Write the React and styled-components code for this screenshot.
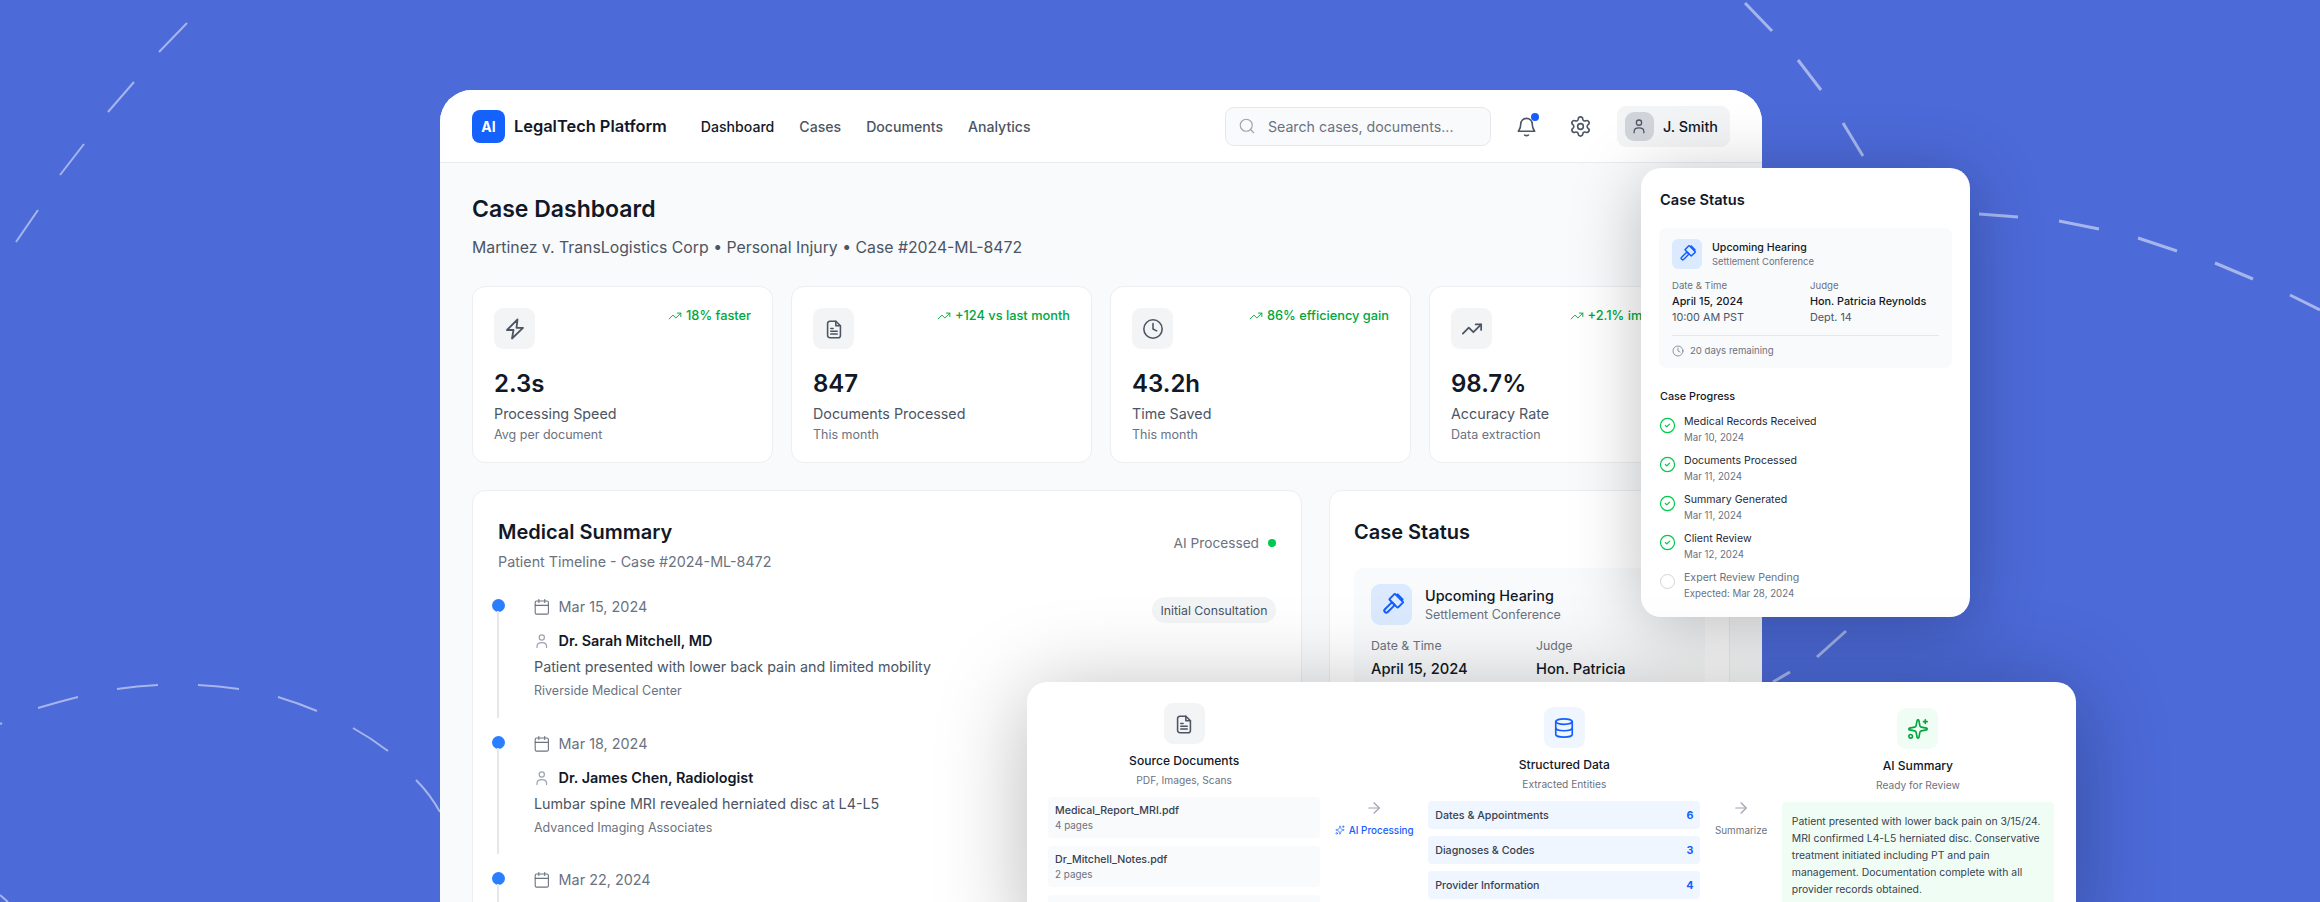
import React from 'react';
import styled, { createGlobalStyle } from 'styled-components';
import { ArrowRight, CircleCheck, Calendar, Clock, Database, Search, Settings, Sparkles, TrendingUp } from 'lucide-react';

const GlobalStyle = createGlobalStyle`
  html, body {
    margin: 0;
    height: 902px;
    overflow: hidden;
    background: #4c6ad8;
    font-family: Inter, "Liberation Sans", sans-serif;
    color: #111827;
  }
  * { box-sizing: border-box; }
`;

const Page = styled.div`
  position: relative;
  width: 2320px;
  height: 902px;
  padding: 90px 0 0 440px;
  overflow: hidden;
  background: #4c6ad8;
`;

const Dashes = styled.svg`
  position: absolute;
  inset: 0;
  width: 2320px;
  height: 902px;
  fill: none;
  stroke: rgba(255, 255, 255, 0.5);
`;

const Window = styled.div`
  position: relative;
  width: 1322px;
  height: 900px;
  border-radius: 32px 32px 0 0;
  background: #f9fafb;
  overflow: hidden;
`;

const Header = styled.header`
  display: flex;
  align-items: center;
  justify-content: space-between;
  height: 73px;
  padding: 0 32px;
  background: #fff;
  border-bottom: 1px solid #e9ebef;
`;

const HeaderGroup = styled.div`
  display: flex;
  align-items: center;
`;

const Logo = styled.div`
  display: flex;
  align-items: center;
  justify-content: center;
  width: 33px;
  height: 33px;
  border-radius: 8px;
  background: #1461fb;
  color: #fff;
  font-size: 14px;
  font-weight: 700;
`;

const Brand = styled.div`
  margin: 0 34px 0 9px;
  font-size: 16.4px;
  font-weight: 600;
  white-space: nowrap;
`;

const Nav = styled.nav`
  display: flex;
  gap: 25px;
`;

const NavLink = styled.a`
  font-size: 14.1px;
  font-weight: 500;
  color: ${(p) => (p.$active ? '#111827' : '#4b5563')};
`;

const SearchBox = styled.div`
  display: flex;
  align-items: center;
  gap: 12px;
  width: 266px;
  height: 39px;
  padding: 0 12px;
  border: 1px solid #e5e7eb;
  border-radius: 9px;
  background: #f9fafb;
  color: #6b7280;
  font-size: 14.2px;
  white-space: nowrap;
`;

const IconButton = styled.div`
  position: relative;
  display: flex;
  align-items: center;
  justify-content: center;
  width: 36px;
  height: 36px;
  margin-left: 18px;
  color: #4b5563;
`;

const BellDot = styled.span`
  position: absolute;
  top: 5px;
  right: 6px;
  width: 8px;
  height: 8px;
  border-radius: 50%;
  background: #155dfc;
`;

const UserPill = styled.div`
  display: flex;
  align-items: center;
  gap: 9px;
  height: 41px;
  margin-left: 18px;
  padding: 0 12px 0 8px;
  border-radius: 9px;
  background: #f3f4f6;
  font-size: 14.4px;
  font-weight: 500;
  white-space: nowrap;
`;

const Avatar = styled.div`
  display: flex;
  align-items: center;
  justify-content: center;
  width: 29px;
  height: 29px;
  border-radius: 9px;
  background: #d1d5db;
  color: #4b5563;
`;

const Content = styled.main`
  padding: 30px 32px 0;
`;

const Title = styled.h1`
  margin: 0;
  font-size: 23px;
  font-weight: 600;
  line-height: 32px;
`;

const Subtitle = styled.p`
  margin: 11px 0 26px;
  font-size: 15.8px;
  line-height: 24px;
  color: #4b5563;
`;

const StatGrid = styled.div`
  display: grid;
  grid-template-columns: repeat(4, 1fr);
  gap: 18px;
`;

const Card = styled.section`
  border: 1px solid #eceef1;
  border-radius: 13px;
  background: #fff;
`;

const StatCard = styled(Card)`
  height: 177px;
  padding: 21px;
`;

const StatTop = styled.div`
  display: flex;
  align-items: flex-start;
  justify-content: space-between;
`;

const IconTile = styled.div`
  display: flex;
  align-items: center;
  justify-content: center;
  flex: none;
  width: ${(p) => p.$size || 41}px;
  height: ${(p) => p.$size || 41}px;
  border-radius: ${(p) => p.$radius || 9}px;
  background: ${(p) => p.$bg || '#f3f4f6'};
  color: ${(p) => p.$color || '#4b5563'};
`;

const Trend = styled.div`
  display: flex;
  align-items: center;
  gap: 4px;
  font-size: 12.8px;
  font-weight: 500;
  line-height: 16px;
  color: #00a63e;
  white-space: nowrap;
`;

const StatValue = styled.div`
  margin-top: 22px;
  font-size: 24px;
  font-weight: 600;
  line-height: 26px;
`;

const StatLabel = styled.div`
  margin-top: 7px;
  font-size: 14.3px;
  line-height: 20px;
  color: #4b5563;
`;

const StatNote = styled.div`
  margin-top: 3px;
  font-size: 12.5px;
  line-height: 16px;
  color: #6b7280;
`;

const Columns = styled.div`
  display: grid;
  grid-template-columns: 830px 1fr;
  gap: 27px;
  margin-top: 27px;
`;

const SummaryCard = styled(Card)`
  height: 600px;
  padding: 27px 25px;
`;

const CardHead = styled.div`
  display: flex;
  align-items: flex-start;
  justify-content: space-between;
  margin-bottom: 25px;
`;

const CardTitle = styled.h2`
  margin: 0;
  font-size: 20px;
  font-weight: 600;
  line-height: 28px;
`;

const CardSub = styled.p`
  margin: 6px 0 0;
  font-size: 14.3px;
  line-height: 20px;
  color: #6b7280;
`;

const Processed = styled.div`
  display: flex;
  align-items: center;
  gap: 9px;
  margin-top: 16px;
  font-size: 13.7px;
  line-height: 18px;
  color: #6b7280;
`;

const GreenDot = styled.span`
  width: 8px;
  height: 8px;
  border-radius: 50%;
  background: #00c950;
`;

const TimelineItem = styled.article`
  position: relative;
  height: 136.5px;
  padding-left: 35px;
`;

const TimelineDot = styled.span`
  position: absolute;
  top: 2px;
  left: -6px;
  width: 13px;
  height: 13px;
  border-radius: 50%;
  background: #2b7fff;
`;

const TimelineLine = styled.span`
  position: absolute;
  top: 14px;
  bottom: 16px;
  left: -1px;
  width: 2px;
  background: #e5e7eb;
`;

const MetaRow = styled.div`
  display: flex;
  align-items: center;
  gap: 8px;
  margin-top: ${(p) => p.$top || 0}px;
  font-size: 14.4px;
  line-height: 20px;
  color: ${(p) => (p.$strong ? '#111827' : '#6b7280')};
  font-weight: ${(p) => (p.$strong ? 600 : 400)};

  svg {
    color: ${(p) => (p.$strong ? '#9ca3af' : '#6b7280')};
  }
`;

const EventText = styled.p`
  margin: 6px 0;
  padding-left: 1px;
  font-size: 14.3px;
  line-height: 20px;
  color: #4b5563;
`;

const Facility = styled.div`
  margin-top: -1px;
  padding-left: 1px;
  font-size: 12.5px;
  line-height: 18px;
  color: #6b7280;
`;

const Tag = styled.span`
  position: absolute;
  top: 0;
  right: 0;
  display: flex;
  align-items: center;
  height: 26px;
  padding: 0 8.5px;
  border-radius: 13px;
  background: #f3f4f6;
  font-size: 12.3px;
  color: #4b5563;
`;

const StatusCard = styled(Card)`
  height: 600px;
  padding: 27px 24px;
`;

const HearingBox = styled.div`
  margin-top: 22px;
  padding: 16px 17px;
  border-radius: 9px;
  background: #f9fafb;
`;

const HearingHead = styled.div`
  display: flex;
  align-items: center;
  gap: ${(p) => p.$gap || 13}px;
`;

const HearingName = styled.div`
  font-size: ${(p) => p.$size || 14.4}px;
  font-weight: 500;
  line-height: ${(p) => p.$line || 20}px;
`;

const HearingType = styled.div`
  font-size: ${(p) => p.$size || 12.5}px;
  line-height: ${(p) => p.$line || 18}px;
  color: #6b7280;
`;

const HearingGrid = styled.div`
  display: grid;
  grid-template-columns: ${(p) => p.$cols || '165px 1fr'};
  margin-top: ${(p) => p.$top || 12}px;
`;

const HearingLabel = styled.div`
  font-size: ${(p) => p.$size || 12.3}px;
  line-height: ${(p) => p.$line || 18}px;
  color: #6b7280;
`;

const HearingValue = styled.div`
  margin-top: ${(p) => p.$top ?? 3}px;
  font-size: ${(p) => p.$size || 14.7}px;
  font-weight: 500;
  line-height: ${(p) => p.$line || 22}px;
`;

const HearingDetail = styled.div`
  font-size: ${(p) => p.$size || 14.7}px;
  line-height: ${(p) => p.$line || 22}px;
  color: #4b5563;
`;

const StatusPopup = styled.aside`
  position: absolute;
  top: 168px;
  left: 1641px;
  width: 329px;
  height: 449px;
  padding: 22px 18px;
  border-radius: 20px;
  background: #fff;
  box-shadow: 0 10px 70px rgba(0, 0, 0, 0.25);
`;

const PopupTitle = styled.h3`
  margin: 0 0 0 1px;
  font-size: 14.6px;
  font-weight: 600;
  line-height: 20px;
`;

const PopupBox = styled.div`
  height: 140px;
  margin-top: 18px;
  padding: 11px 13px;
  border-radius: 7px;
  background: #f9fafb;
`;

const Remaining = styled.div`
  display: flex;
  align-items: center;
  gap: 6px;
  margin-top: 9px;
  padding-top: 7px;
  border-top: 1px solid #e5e7eb;
  font-size: 9.6px;
  line-height: 16px;
  color: #6b7280;
`;

const ProgressTitle = styled.h4`
  margin: 21px 0 9px 1px;
  font-size: 10.8px;
  font-weight: 500;
  line-height: 16px;
`;

const ProgressItem = styled.div`
  display: flex;
  gap: 8px;
  height: 39px;
`;

const PendingMark = styled.span`
  flex: none;
  width: 15px;
  height: 15px;
  margin: 4px 1px 0 1px;
  border: 1px solid #d1d5db;
  border-radius: 50%;
`;

const CheckMark = styled(CircleCheck)`
  flex: none;
  margin-top: 3px;
  color: #00c950;
`;

const ProgressName = styled.div`
  font-size: 10.6px;
  line-height: 16px;
  color: ${(p) => (p.$pending ? '#6b7280' : '#1f2937')};
`;

const ProgressDate = styled.div`
  font-size: 9.7px;
  line-height: 16px;
  color: #6b7280;
`;

const FlowPopup = styled.aside`
  position: absolute;
  top: 682px;
  left: 1027px;
  display: flex;
  gap: 14.5px;
  width: 1049px;
  height: 260px;
  padding: 0 22px 0 21px;
  border-radius: 20px;
  background: #fff;
  box-shadow: 0 10px 90px rgba(0, 0, 0, 0.28);
`;

const FlowColumn = styled.div`
  display: flex;
  flex: 1 1 0;
  flex-direction: column;
  align-items: center;
  padding-top: ${(p) => p.$top}px;
`;

const FlowTitle = styled.div`
  margin-top: 8px;
  font-size: 12.1px;
  font-weight: 500;
  line-height: 18px;
`;

const FlowSub = styled.div`
  margin: 2px 0 9px;
  font-size: 10.2px;
  line-height: 16px;
  color: #6b7280;
`;

const RowList = styled.div`
  display: flex;
  flex-direction: column;
  gap: ${(p) => p.$gap}px;
  align-self: stretch;
`;

const FileItem = styled.div`
  height: 41px;
  padding: 7px;
  border-radius: 4px;
  background: #f9fafb;
`;

const FileName = styled.div`
  font-size: 10.6px;
  font-weight: 500;
  line-height: 14px;
  color: #374151;
`;

const FilePages = styled.div`
  font-size: 9.9px;
  line-height: 14px;
  color: #6b7280;
`;

const EntityRow = styled.div`
  display: flex;
  align-items: center;
  justify-content: space-between;
  height: 28px;
  padding: 0 7px;
  border-radius: 4px;
  background: #eff6ff;
  font-size: 10.7px;
  font-weight: 500;
  color: #374151;
`;

const EntityCount = styled.span`
  font-weight: 700;
  color: #155dfc;
`;

const Connector = styled.div`
  display: flex;
  flex: none;
  flex-direction: column;
  align-items: center;
  gap: 5px;
  padding-top: 117px;
  color: #9ca3af;
`;

const ConnectorLabel = styled.div`
  display: flex;
  align-items: center;
  gap: 4px;
  font-size: 9.9px;
  font-weight: ${(p) => (p.$active ? 500 : 400)};
  line-height: 16px;
  color: ${(p) => (p.$active ? '#155dfc' : '#6b7280')};
  white-space: nowrap;
`;

const SummaryBox = styled.div`
  align-self: stretch;
  height: 120px;
  padding: 11px 9px 0 10px;
  border-radius: 4px;
  background: #f0fdf4;
  font-size: 10.4px;
  line-height: 17px;
  color: #374151;
`;

function ZapIcon({ size = 24 }) {
  return (
    <svg width={size} height={size} viewBox="0 0 24 24" fill="none" stroke="currentColor" strokeWidth="1.8" strokeLinejoin="round">
      <path d="M14.5 2.500L4 13h6.500L9 21.500 20 10.800h-6.500z" />
    </svg>
  );
}

function DocIcon({ size = 22 }) {
  return (
    <svg width={size} height={size} viewBox="0 0 24 24" fill="none" stroke="currentColor" strokeWidth="1.7" strokeLinecap="round" strokeLinejoin="round">
      <path d="M5 6a2.500 2.500 0 0 1 2.500-2.500H14l5 5V19a2.500 2.500 0 0 1-2.500 2.500h-9A2.500 2.500 0 0 1 5 19z" />
      <path d="M14 3.500v5h5M8.500 11.500h2.500M8.500 14.500h7M8.500 17.500h7" />
    </svg>
  );
}

function BellIcon({ size = 23 }) {
  return (
    <svg width={size} height={size} viewBox="0 0 24 24" fill="none" stroke="currentColor" strokeWidth="1.7" strokeLinecap="round" strokeLinejoin="round">
      <path d="M6 9.500a6 6 0 0 1 12 0c0 4.500 1.500 6 2.500 7.500h-17C4.500 15.500 6 14 6 9.500z" />
      <path d="M10 21c1.300.6 2.700.6 4 0" />
    </svg>
  );
}

function PersonIcon({ size = 18 }) {
  return (
    <svg width={size} height={size} viewBox="0 0 24 24" fill="none" stroke="currentColor" strokeWidth="1.7" strokeLinecap="round">
      <circle cx="12" cy="7.500" r="3.500" />
      <path d="M5.500 21v-1.500c0-3 2.500-5 6.500-5s6.500 2 6.500 5V21" />
    </svg>
  );
}

function GavelIcon({ size = 24 }) {
  return (
    <svg width={size} height={size} viewBox="0 0 24 24" fill="none" stroke="currentColor" strokeWidth="2" strokeLinejoin="round">
      <g transform="rotate(45 12 12)">
        <rect x="6" y="2" width="12" height="8" rx="1" />
        <path d="M8.500 2V0.500h7V2" />
        <rect x="10" y="10" width="4" height="12" rx="2" />
      </g>
    </svg>
  );
}

const leftDashes = [
  'M159 52L187 23',
  'M108 112L134 82',
  'M60 175L84 144',
  'M16 242L38 210',
  'M0 724L2 723',
  'M38 708Q58 702 78 697',
  'M117 689Q137 686 158 685',
  'M198 685Q219 686 239 689',
  'M278 697Q298 703 317 711',
  'M353 728Q371 738 388 751',
  'M416 780Q430 794 440 812',
  'M0 895L8 902',
];

const rightDashes = [
  'M1745 3L1772 31',
  'M1798 60L1821 90',
  'M1843 123L1863 156',
  'M1979 214L2018 217',
  'M2059 221L2099 229',
  'M2138 238L2177 251',
  'M2215 263L2253 279',
  'M2290 295L2320 310',
  'M1817 657L1846 631',
  'M1773 682L1790 672',
];

const stats = [
  { icon: <ZapIcon />, trend: '18% faster', value: '2.3s', label: 'Processing Speed', note: 'Avg per document' },
  { icon: <DocIcon />, trend: '+124 vs last month', value: '847', label: 'Documents Processed', note: 'This month' },
  { icon: <Clock size={22} strokeWidth={1.7} />, trend: '86% efficiency gain', value: '43.2h', label: 'Time Saved', note: 'This month' },
  { icon: <TrendingUp size={22} strokeWidth={1.9} />, trend: '+2.1% improvement', value: '98.7%', label: 'Accuracy Rate', note: 'Data extraction' },
];

const timeline = [
  {
    date: 'Mar 15, 2024',
    doctor: 'Dr. Sarah Mitchell, MD',
    text: 'Patient presented with lower back pain and limited mobility',
    place: 'Riverside Medical Center',
    tag: 'Initial Consultation',
  },
  {
    date: 'Mar 18, 2024',
    doctor: 'Dr. James Chen, Radiologist',
    text: 'Lumbar spine MRI revealed herniated disc at L4-L5',
    place: 'Advanced Imaging Associates',
  },
  { date: 'Mar 22, 2024' },
];

const progress = [
  { name: 'Medical Records Received', date: 'Mar 10, 2024' },
  { name: 'Documents Processed', date: 'Mar 11, 2024' },
  { name: 'Summary Generated', date: 'Mar 11, 2024' },
  { name: 'Client Review', date: 'Mar 12, 2024' },
  { name: 'Expert Review Pending', date: 'Expected: Mar 28, 2024', pending: true },
];

const entities = [
  { name: 'Dates & Appointments', count: 6 },
  { name: 'Diagnoses & Codes', count: 3 },
  { name: 'Provider Information', count: 4 },
];

export default function App() {
  return (
    <Page>
      <GlobalStyle />
      <Dashes viewBox="0 0 2320 902">
        <g strokeWidth="2">
          {leftDashes.map((d) => (
            <path key={d} d={d} />
          ))}
        </g>
        <g strokeWidth="3">
          {rightDashes.map((d) => (
            <path key={d} d={d} />
          ))}
        </g>
      </Dashes>

      <Window>
        <Header>
          <HeaderGroup>
            <Logo>AI</Logo>
            <Brand>LegalTech Platform</Brand>
            <Nav>
              <NavLink $active>Dashboard</NavLink>
              <NavLink>Cases</NavLink>
              <NavLink>Documents</NavLink>
              <NavLink>Analytics</NavLink>
            </Nav>
          </HeaderGroup>
          <HeaderGroup>
            <SearchBox>
              <Search size={18} strokeWidth={1.5} color="#9ca3af" />
              Search cases, documents...
            </SearchBox>
            <IconButton>
              <BellIcon />
              <BellDot />
            </IconButton>
            <IconButton>
              <Settings size={23} strokeWidth={1.7} />
            </IconButton>
            <UserPill>
              <Avatar>
                <PersonIcon />
              </Avatar>
              J. Smith
            </UserPill>
          </HeaderGroup>
        </Header>

        <Content>
          <Title>Case Dashboard</Title>
          <Subtitle>Martinez v. TransLogistics Corp • Personal Injury • Case #2024-ML-8472</Subtitle>

          <StatGrid>
            {stats.map(({ icon, trend, value, label, note }) => (
              <StatCard key={label}>
                <StatTop>
                  <IconTile>{icon}</IconTile>
                  <Trend>
                    <TrendingUp size={14} strokeWidth={1.6} />
                    {trend}
                  </Trend>
                </StatTop>
                <StatValue>{value}</StatValue>
                <StatLabel>{label}</StatLabel>
                <StatNote>{note}</StatNote>
              </StatCard>
            ))}
          </StatGrid>

          <Columns>
            <SummaryCard>
              <CardHead>
                <div>
                  <CardTitle>Medical Summary</CardTitle>
                  <CardSub>Patient Timeline - Case #2024-ML-8472</CardSub>
                </div>
                <Processed>
                  AI Processed
                  <GreenDot />
                </Processed>
              </CardHead>
              {timeline.map((item) => (
                <TimelineItem key={item.date}>
                  <TimelineDot />
                  <TimelineLine />
                  {item.tag && <Tag>{item.tag}</Tag>}
                  <MetaRow>
                    <Calendar size={17.6} strokeWidth={1.5} />
                    {item.date}
                  </MetaRow>
                  {item.doctor && (
                    <>
                      <MetaRow $strong $top={14}>
                        <PersonIcon size={17.6} />
                        {item.doctor}
                      </MetaRow>
                      <EventText>{item.text}</EventText>
                      <Facility>{item.place}</Facility>
                    </>
                  )}
                </TimelineItem>
              ))}
            </SummaryCard>

            <StatusCard>
              <CardTitle>Case Status</CardTitle>
              <HearingBox>
                <HearingHead>
                  <IconTile $bg="#dbeafe" $color="#155dfc">
                    <GavelIcon />
                  </IconTile>
                  <div>
                    <HearingName>Upcoming Hearing</HearingName>
                    <HearingType>Settlement Conference</HearingType>
                  </div>
                </HearingHead>
                <HearingGrid>
                  <div>
                    <HearingLabel>Date &amp; Time</HearingLabel>
                    <HearingValue>April 15, 2024</HearingValue>
                  </div>
                  <div>
                    <HearingLabel>Judge</HearingLabel>
                    <HearingValue>Hon. Patricia</HearingValue>
                  </div>
                </HearingGrid>
              </HearingBox>
            </StatusCard>
          </Columns>
        </Content>
      </Window>

      <StatusPopup>
        <PopupTitle>Case Status</PopupTitle>
        <PopupBox>
          <HearingHead $gap={10}>
            <IconTile $size={30} $radius={6} $bg="#dbeafe" $color="#155dfc">
              <GavelIcon size={18} />
            </IconTile>
            <div>
              <HearingName $size={10.6} $line={15}>Upcoming Hearing</HearingName>
              <HearingType $size={9.4} $line={14}>Settlement Conference</HearingType>
            </div>
          </HearingHead>
          <HearingGrid $cols="138px 1fr" $top={9}>
            <div>
              <HearingLabel $size={9.6} $line={16}>Date &amp; Time</HearingLabel>
              <HearingValue $size={10.8} $line={16} $top={0}>April 15, 2024</HearingValue>
              <HearingDetail $size={10.8} $line={16}>10:00 AM PST</HearingDetail>
            </div>
            <div>
              <HearingLabel $size={9.6} $line={16}>Judge</HearingLabel>
              <HearingValue $size={10.8} $line={16} $top={0}>Hon. Patricia Reynolds</HearingValue>
              <HearingDetail $size={10.8} $line={16}>Dept. 14</HearingDetail>
            </div>
          </HearingGrid>
          <Remaining>
            <Clock size={12} strokeWidth={1.5} />
            20 days remaining
          </Remaining>
        </PopupBox>
        <ProgressTitle>Case Progress</ProgressTitle>
        {progress.map((step) => (
          <ProgressItem key={step.name}>
            {step.pending ? <PendingMark /> : <CheckMark size={17} strokeWidth={1.7} />}
            <div>
              <ProgressName $pending={step.pending}>{step.name}</ProgressName>
              <ProgressDate>{step.date}</ProgressDate>
            </div>
          </ProgressItem>
        ))}
      </StatusPopup>

      <FlowPopup>
        <FlowColumn $top={21}>
          <IconTile>
            <DocIcon />
          </IconTile>
          <FlowTitle>Source Documents</FlowTitle>
          <FlowSub>PDF, Images, Scans</FlowSub>
          <RowList $gap={8}>
            <FileItem>
              <FileName>Medical_Report_MRI.pdf</FileName>
              <FilePages>4 pages</FilePages>
            </FileItem>
            <FileItem>
              <FileName>Dr_Mitchell_Notes.pdf</FileName>
              <FilePages>2 pages</FilePages>
            </FileItem>
            <FileItem />
          </RowList>
        </FlowColumn>

        <Connector>
          <ArrowRight size={18} strokeWidth={1.5} />
          <ConnectorLabel $active>
            <Sparkles size={10} strokeWidth={1.5} />
            AI Processing
          </ConnectorLabel>
        </Connector>

        <FlowColumn $top={25}>
          <IconTile $bg="#eff6ff" $color="#155dfc">
            <Database size={22} strokeWidth={1.8} />
          </IconTile>
          <FlowTitle>Structured Data</FlowTitle>
          <FlowSub>Extracted Entities</FlowSub>
          <RowList $gap={7}>
            {entities.map((entity) => (
              <EntityRow key={entity.name}>
                {entity.name}
                <EntityCount>{entity.count}</EntityCount>
              </EntityRow>
            ))}
          </RowList>
        </FlowColumn>

        <Connector>
          <ArrowRight size={18} strokeWidth={1.5} />
          <ConnectorLabel>Summarize</ConnectorLabel>
        </Connector>

        <FlowColumn $top={26}>
          <IconTile $bg="#f0fdf4" $color="#00a63e">
            <Sparkles size={22} strokeWidth={1.8} />
          </IconTile>
          <FlowTitle>AI Summary</FlowTitle>
          <FlowSub>Ready for Review</FlowSub>
          <SummaryBox>
            Patient presented with lower back pain on 3/15/24. MRI confirmed L4-L5 herniated disc. Conservative
            treatment initiated including PT and pain management. Documentation complete with all provider records
            obtained.
          </SummaryBox>
        </FlowColumn>
      </FlowPopup>
    </Page>
  );
}
